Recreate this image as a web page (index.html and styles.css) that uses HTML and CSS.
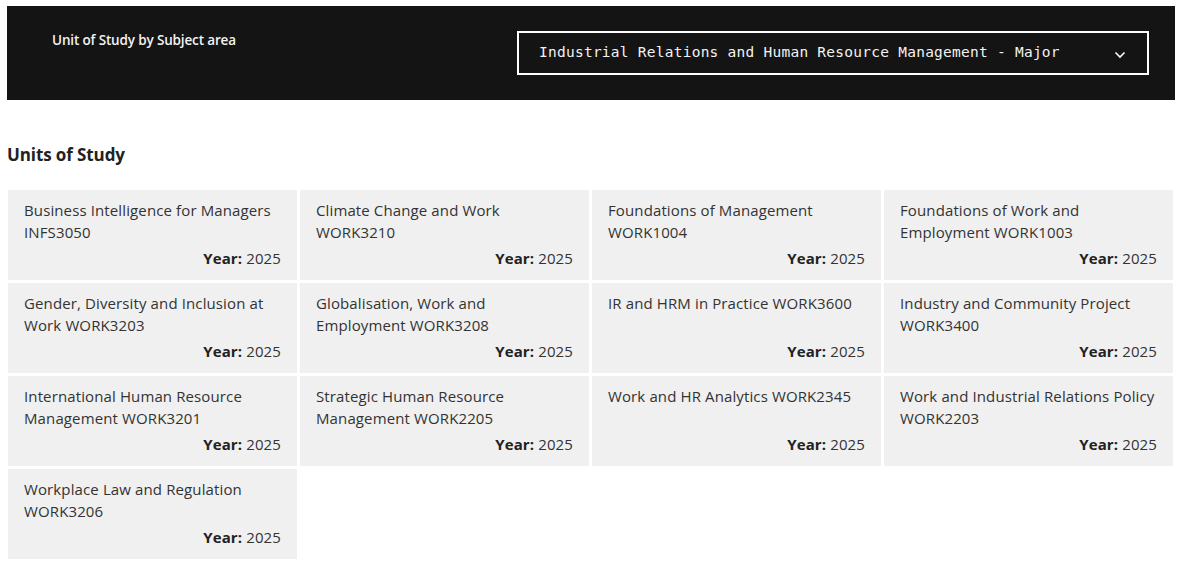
FILE: index.html
```html
<!DOCTYPE html>
<html lang="en">
<head>
<meta charset="utf-8">
<title>Units of Study</title>
<link rel="stylesheet" href="styles.css">
</head>
<body>
<div class="page">
  <header class="filter">
    <div class="filter-label">Unit of Study by Subject area</div>
    <div class="select">
      <span class="select-text">Industrial Relations and Human Resource Management - Major</span>
      <svg class="chevron" width="12" height="8" viewBox="0 0 12 8"><path d="M1.5 1.5 L6 6 L10.5 1.5" fill="none" stroke="#fff" stroke-width="1.6"/></svg>
    </div>
  </header>
  <h2 class="section-title">Units of Study</h2>
  <div class="grid">
    <div class="card"><div class="card-title">Business Intelligence for Managers INFS3050</div><div class="year"><b>Year:</b> 2025</div></div>
    <div class="card"><div class="card-title">Climate Change and Work WORK3210</div><div class="year"><b>Year:</b> 2025</div></div>
    <div class="card"><div class="card-title">Foundations of Management WORK1004</div><div class="year"><b>Year:</b> 2025</div></div>
    <div class="card"><div class="card-title">Foundations of Work and Employment WORK1003</div><div class="year"><b>Year:</b> 2025</div></div>
    <div class="card"><div class="card-title">Gender, Diversity and Inclusion at Work WORK3203</div><div class="year"><b>Year:</b> 2025</div></div>
    <div class="card"><div class="card-title">Globalisation, Work and Employment WORK3208</div><div class="year"><b>Year:</b> 2025</div></div>
    <div class="card"><div class="card-title">IR and HRM in Practice WORK3600</div><div class="year"><b>Year:</b> 2025</div></div>
    <div class="card"><div class="card-title">Industry and Community Project WORK3400</div><div class="year"><b>Year:</b> 2025</div></div>
    <div class="card"><div class="card-title">International Human Resource Management WORK3201</div><div class="year"><b>Year:</b> 2025</div></div>
    <div class="card"><div class="card-title">Strategic Human Resource Management WORK2205</div><div class="year"><b>Year:</b> 2025</div></div>
    <div class="card"><div class="card-title">Work and HR Analytics WORK2345</div><div class="year"><b>Year:</b> 2025</div></div>
    <div class="card"><div class="card-title">Work and Industrial Relations Policy WORK2203</div><div class="year"><b>Year:</b> 2025</div></div>
    <div class="card"><div class="card-title">Workplace Law and Regulation WORK3206</div><div class="year"><b>Year:</b> 2025</div></div>
  </div>
</div>
</body>
</html>
```
FILE: styles.css
```css
* { box-sizing: border-box; }
html, body { margin: 0; padding: 0; background: #fff; }
body { font-family: "Open Sans", "Liberation Sans", sans-serif; color: #333; }
.page { padding: 6px 5px 0 7px; }
.filter {
  background: #141414;
  height: 94px;
  padding: 25px 26px 25px 45px;
  display: flex;
  justify-content: space-between;
  align-items: flex-start;
}
.filter-label {
  color: #f2f2f2;
  font-size: 13.5px;
  font-weight: 600;
  line-height: 18px;
  letter-spacing: -0.15px;
}
.select {
  width: 632px;
  height: 44px;
  border: 2px solid #fff;
  display: flex;
  align-items: center;
  justify-content: space-between;
  padding: 0 21px 2px 20px;
}
.select-text {
  font-family: "DejaVu Sans Mono", "Liberation Mono", monospace;
  font-size: 14.5px;
  color: #f2f2f2;
  letter-spacing: 0.25px;
}
.chevron { margin-top: 5px; }
.section-title {
  margin: 44px 0 0 0;
  font-size: 17px;
  font-weight: 700;
  color: #222;
  line-height: 22px;
  letter-spacing: -0.1px;
}
.grid {
  margin: 24px 2px 0 1px;
  display: grid;
  grid-template-columns: repeat(4, 1fr);
  grid-auto-rows: 90px;
  gap: 3px;
}
.card {
  background: #f0f0f0;
  padding: 9px 16px 11px 16px;
  display: flex;
  flex-direction: column;
  font-size: 15px;
  line-height: 22px;
  letter-spacing: 0.12px;
  color: #333;
}
.year { margin-top: auto; text-align: right; }
.year b { font-weight: 700; color: #222; }
```
